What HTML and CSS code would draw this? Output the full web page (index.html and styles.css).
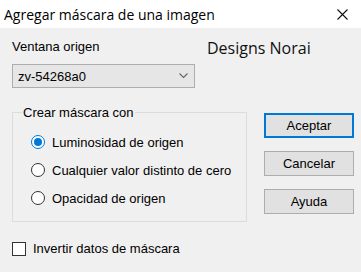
FILE: index.html
```html
<!DOCTYPE html>
<html lang="es">
<head>
    <meta charset="UTF-8">
    <title>Agregar máscara de una imagen</title>
    <link rel="stylesheet" href="styles.css">
</head>
<body>
    <div class="window">
        <div class="titlebar">
            <span class="title">Agregar máscara de una imagen</span>
            <svg class="close" width="11" height="11" viewBox="0 0 11 11">
                <path d="M0.5 0.5 L10.5 10.5 M10.5 0.5 L0.5 10.5" stroke="#111" stroke-width="1.1" fill="none"/>
            </svg>
        </div>
        <div class="content">
            <div class="main">
                <div class="top-row">
                    <div class="field">
                        <label class="field-label">Ventana origen</label>
                        <div class="select">
                            <span>zv-54268a0</span>
                            <svg width="9" height="6" viewBox="0 0 9 6">
                                <path d="M0.5 0.5 L4.5 4.5 L8.5 0.5" stroke="#666" stroke-width="1.1" fill="none"/>
                            </svg>
                        </div>
                    </div>
                    <div class="brand">Designs Norai</div>
                </div>
                <fieldset class="group">
                    <legend>Crear máscara con</legend>
                    <label class="option"><span class="radio checked"></span>Luminosidad de origen</label>
                    <label class="option"><span class="radio"></span>Cualquier valor distinto de cero</label>
                    <label class="option"><span class="radio"></span>Opacidad de origen</label>
                </fieldset>
                <label class="check-row"><span class="checkbox"></span>Invertir datos de máscara</label>
            </div>
            <div class="buttons">
                <button class="btn default">Aceptar</button>
                <button class="btn">Cancelar</button>
                <button class="btn">Ayuda</button>
            </div>
        </div>
    </div>
</body>
</html>
```

FILE: styles.css
```css
body {
    margin: 0;
    background-color: #f0f0f0;
    font-family: 'Liberation Sans', Arial, sans-serif;
    font-size: 13px;
    color: #000;
}
.window {
    width: 361px;
    height: 272px;
    overflow: hidden;
}
.titlebar {
    height: 28px;
    background: #ffffff;
    display: flex;
    align-items: center;
    justify-content: space-between;
    padding: 0 13px 0 4px;
}
.title {
    font-family: 'Open Sans', sans-serif;
    font-size: 14px;
    color: #000;
}
.content {
    display: flex;
    padding-left: 12px;
}
.main {
    width: 235px;
}
.top-row {
    display: flex;
    margin-top: 11px;
}
.field-label {
    display: block;
    line-height: 15px;
}
.select {
    margin-top: 10px;
    width: 183px;
    height: 24px;
    box-sizing: border-box;
    border: 1px solid #adadad;
    background: #e6e6e6;
    display: flex;
    align-items: center;
    justify-content: space-between;
    padding: 0 6px 0 5px;
}
.brand {
    margin-left: 12px;
    margin-top: -2px;
    font-family: 'Open Sans', sans-serif;
    font-size: 16px;
    color: #111;
    white-space: nowrap;
}
.group {
    margin: 17px 0 0 0;
    padding: 8px 0 9px 18px;
    border: 1px solid #dcdcdc;
    box-sizing: border-box;
    width: 235px;
}
.group legend {
    margin-left: -9px;
    padding: 0 1px;
    line-height: 15px;
}
.option {
    display: flex;
    align-items: center;
    height: 28px;
}
.radio {
    width: 14px;
    height: 14px;
    box-sizing: border-box;
    border: 1px solid #333;
    border-radius: 50%;
    background: #fff;
    margin-right: 7px;
    display: flex;
    align-items: center;
    justify-content: center;
}
.radio.checked {
    border-color: #0078d7;
}
.radio.checked::after {
    content: '';
    width: 8px;
    height: 8px;
    border-radius: 50%;
    background: #0078d7;
}
.check-row {
    display: flex;
    align-items: center;
    margin-top: 19px;
}
.checkbox {
    width: 14px;
    height: 14px;
    box-sizing: border-box;
    border: 1px solid #333;
    background: #fff;
    margin-right: 7px;
}
.buttons {
    display: flex;
    flex-direction: column;
    gap: 13px;
    margin-left: 17px;
    margin-top: 85px;
}
.btn {
    width: 90px;
    height: 25px;
    box-sizing: border-box;
    border: 1px solid #adadad;
    background: #e1e1e1;
    font-family: 'Liberation Sans', Arial, sans-serif;
    font-size: 13px;
    color: #000;
    padding: 0;
}
.btn.default {
    border: 2px solid #0078d7;
}
```
